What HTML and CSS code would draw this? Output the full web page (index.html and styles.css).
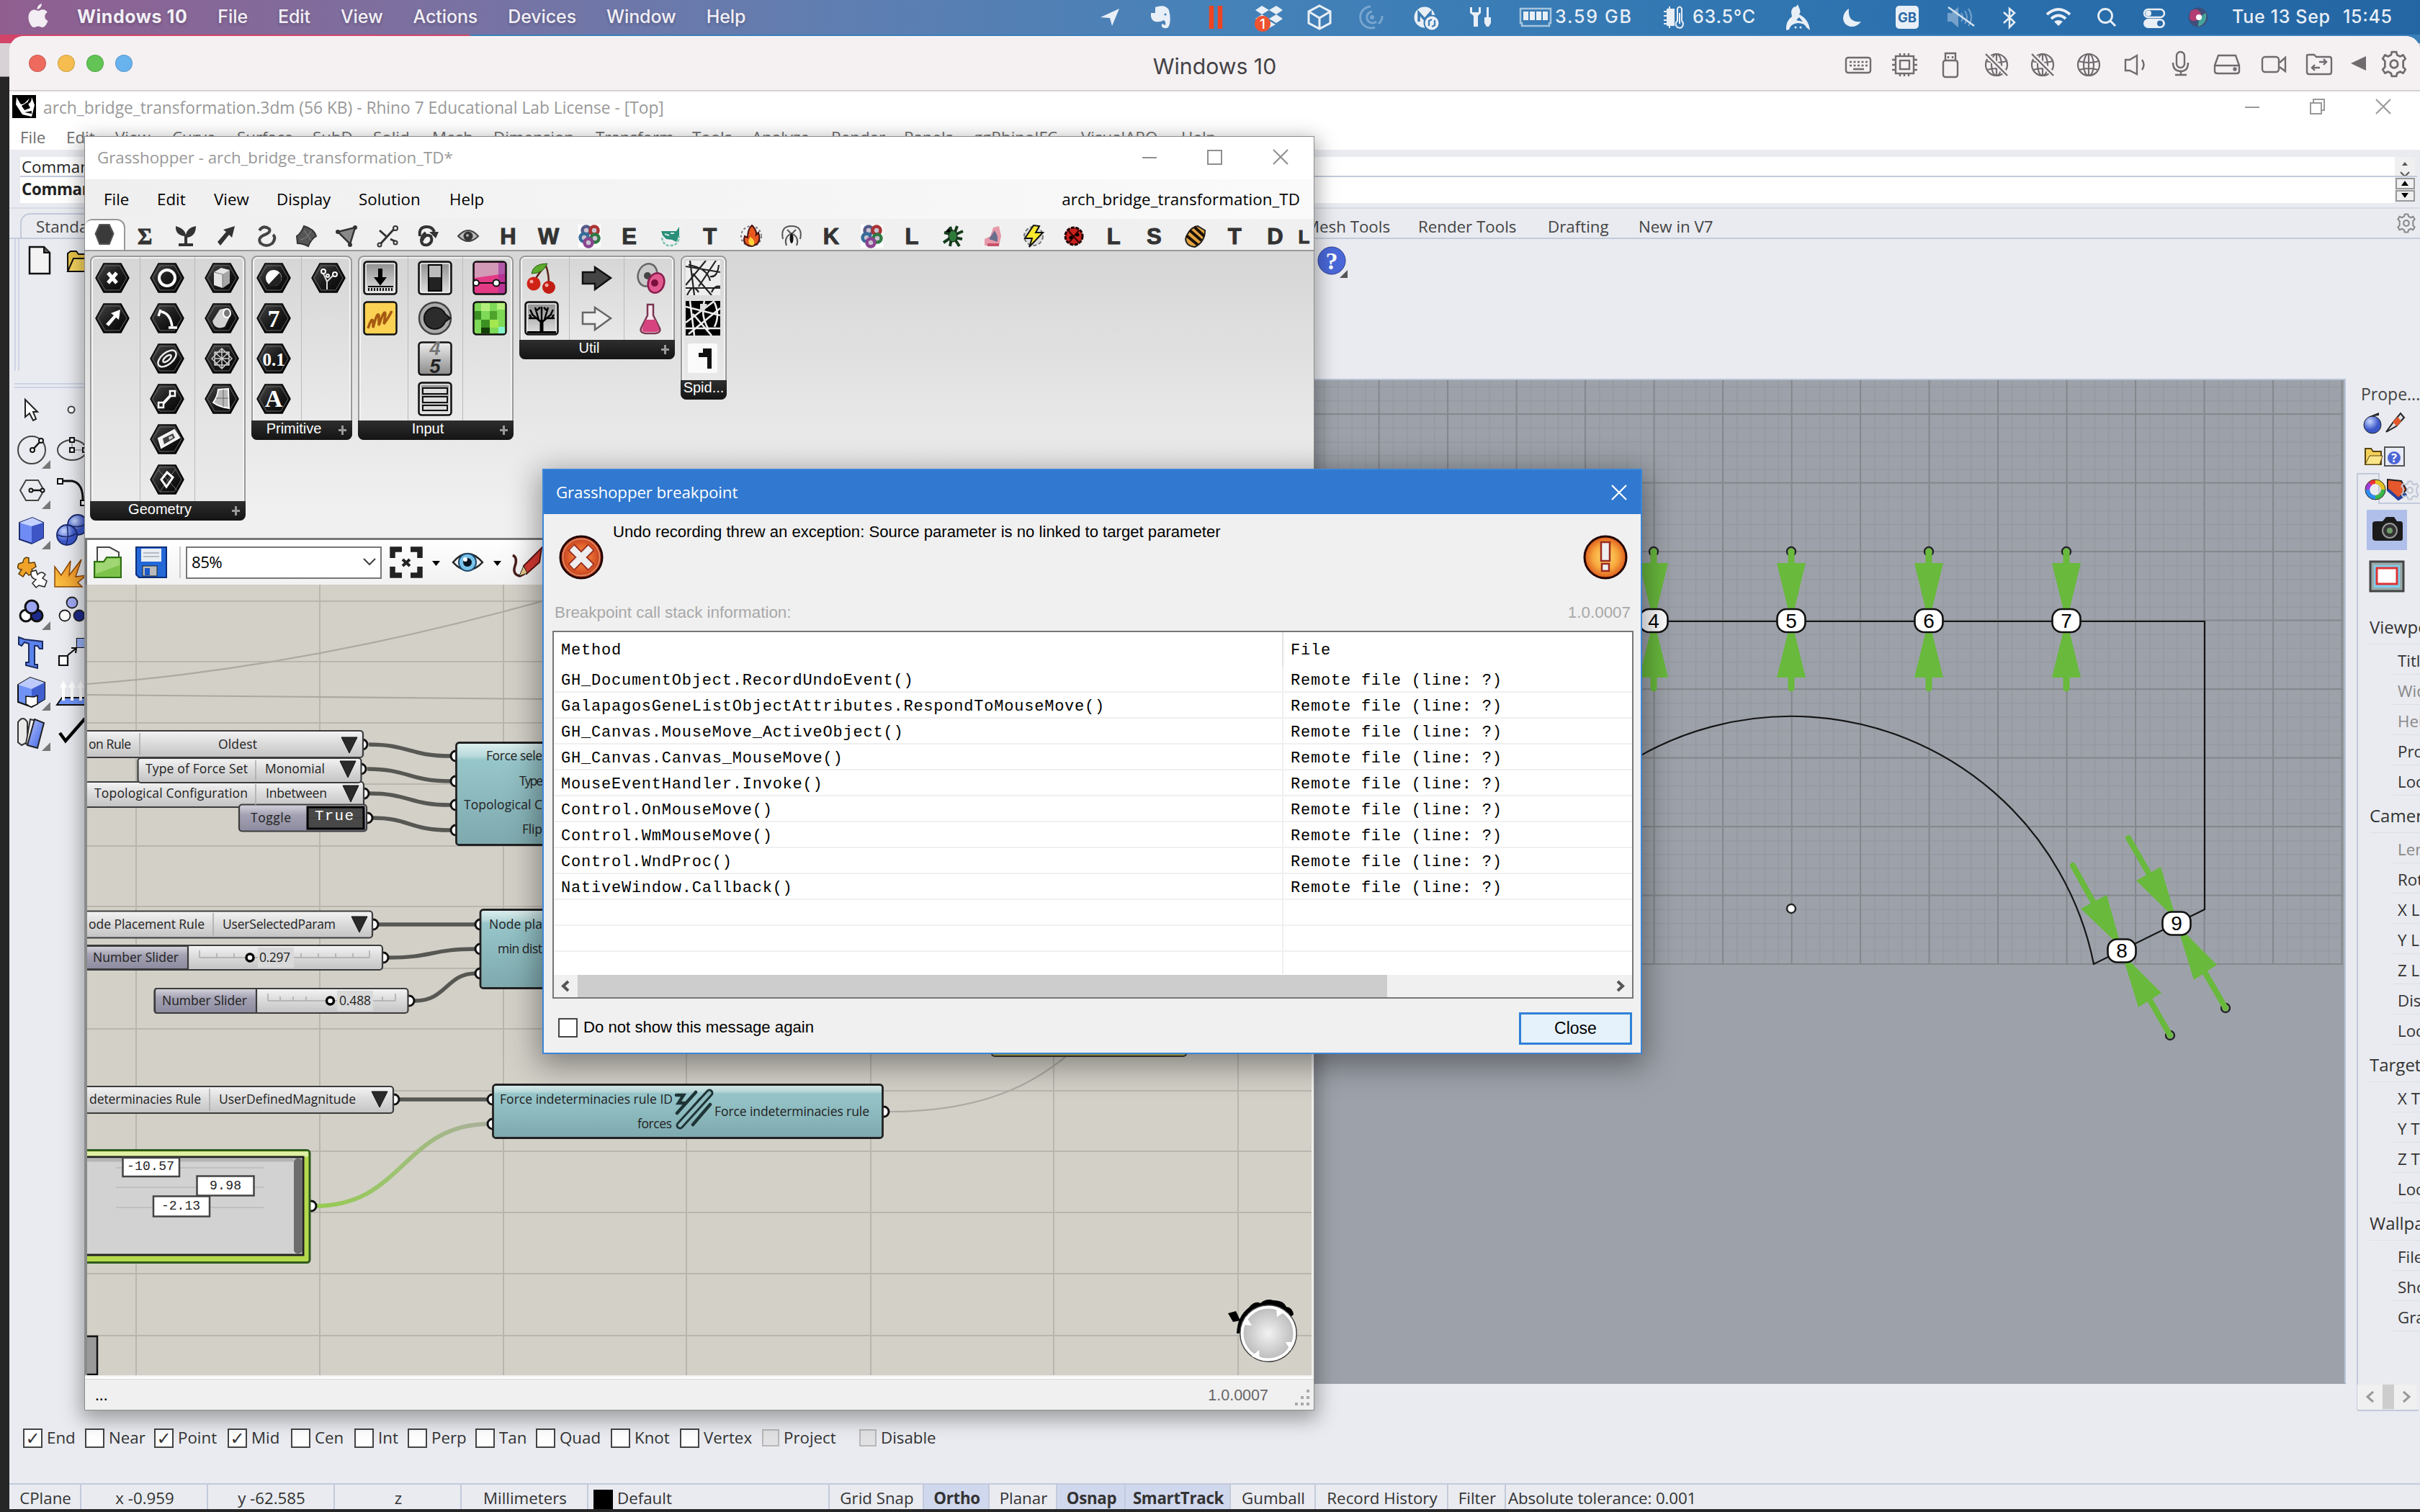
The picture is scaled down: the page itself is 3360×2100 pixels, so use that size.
FILE: index.html
```html
<!DOCTYPE html>
<html lang="en">
<head>
<meta charset="utf-8">
<title>Windows 10</title>
<link rel="stylesheet" href="styles.css">
</head>
<body>
<svg class="defs" width="0" height="0">
  <defs>
    <linearGradient id="hexg" x1="0" y1="0" x2="1" y2="1"><stop offset="0" stop-color="#4a4a4a"/><stop offset=".5" stop-color="#1c1c1c"/><stop offset="1" stop-color="#000"/></linearGradient>
    <linearGradient id="greyg" x1="0" y1="0" x2="0" y2="1"><stop offset="0" stop-color="#eee"/><stop offset="1" stop-color="#8a8a8a"/></linearGradient>
    <linearGradient id="greyr" x1="0" y1="0" x2="0" y2="1"><stop offset="0" stop-color="#8d8d8d"/><stop offset="1" stop-color="#e2e2e2"/></linearGradient>
    <linearGradient id="blueg" x1="0" y1="0" x2="1" y2="1"><stop offset="0" stop-color="#b5c8ff"/><stop offset="1" stop-color="#3c5ee0"/></linearGradient>
    <linearGradient id="flame" x1="0" y1="1" x2="1" y2="0"><stop offset="0" stop-color="#f9c545"/><stop offset="1" stop-color="#ee7d1c"/></linearGradient>
    <linearGradient id="teal" x1="0" y1="0" x2="0" y2="1"><stop offset="0" stop-color="#dff0f0"/><stop offset=".13" stop-color="#b9d9da"/><stop offset=".17" stop-color="#97c6ca"/><stop offset="1" stop-color="#7ea9ae"/></linearGradient>
    <linearGradient id="node" x1="0" y1="0" x2="0" y2="1"><stop offset="0" stop-color="#f4f4f4"/><stop offset=".45" stop-color="#dcdcdc"/><stop offset="1" stop-color="#c3c3c3"/></linearGradient>
    <linearGradient id="mauve" x1="0" y1="0" x2="0" y2="1"><stop offset="0" stop-color="#d5d4dc"/><stop offset=".4" stop-color="#a3a1b2"/><stop offset="1" stop-color="#8c8a9e"/></linearGradient>
    <linearGradient id="wire" x1="0" y1="0" x2="1" y2="0"><stop offset="0" stop-color="#96cb50"/><stop offset=".4" stop-color="#9cc46c"/><stop offset="1" stop-color="#a9ae9c"/></linearGradient>
    <radialGradient id="knob"><stop offset="0" stop-color="#f2f2f2"/><stop offset="1" stop-color="#b8b8b8"/></radialGradient>
    <radialGradient id="redg"><stop offset="0" stop-color="#f5a050"/><stop offset=".6" stop-color="#e2602c"/><stop offset="1" stop-color="#b83a1c"/></radialGradient>
    <radialGradient id="ambg"><stop offset="0" stop-color="#ffe070"/><stop offset=".6" stop-color="#f7a63c"/><stop offset="1" stop-color="#dc5a1c"/></radialGradient>
    <radialGradient id="ball" cx=".35" cy=".3"><stop offset="0" stop-color="#c9d8ff"/><stop offset="1" stop-color="#3b57c9"/></radialGradient>
    <pattern id="gridMinor" x="3251.5" y="1339" width="19.1" height="19.1" patternUnits="userSpaceOnUse"><path d="M0 0H19.1M0 0V19.1" stroke="#8c9197" stroke-width="3" fill="none"/></pattern>
    <pattern id="gridMajor" x="3250.5" y="1338" width="95.5" height="95.5" patternUnits="userSpaceOnUse"><path d="M0 1H95.5M1 0V95.5" stroke="#85888c" stroke-width="2" fill="none"/></pattern>
    <symbol id="hex" viewBox="0 0 48 42"><path d="M1 21L12 1H36L47 21L36 41H12Z" fill="url(#hexg)" stroke="#000" stroke-width="1.5"/><path d="M4 21L14 4H34L44 21L34 38H14Z" fill="none" stroke="#666" stroke-width="1"/></symbol>
    <symbol id="tile" viewBox="0 0 48 48"><rect x="1.5" y="1.5" width="45" height="45" rx="4" fill="url(#greyr)" stroke="#111" stroke-width="2.5"/><rect x="4" y="4" width="40" height="40" rx="2" fill="none" stroke="#eee" stroke-width="1.5"/></symbol>
    <symbol id="knot" viewBox="-18 -18 36 36"><rect x="-16" y="-16" width="31" height="32" fill="#fff"/><g fill="#c9c3d2" stroke-width="4.500"><circle cx="-5" cy="-8" r="5.5" stroke="#555a8a"/><circle cx="6" cy="-8" r="5.5" stroke="#a33"/><circle cx="-8" cy="2" r="5.5" stroke="#366d9a"/><circle cx="7" cy="3" r="5.5" stroke="#2f7a43"/><circle cx="-2" cy="9" r="5.5" stroke="#8a4490"/></g></symbol>
    <symbol id="gear" viewBox="-18 -18 36 36"><g fill="none" stroke="currentColor" stroke-width="2.6"><circle r="5"/><path d="M-3-16H3L4-12L8-10L12-12L15-7L12-4V4L15 7L12 12L8 10L4 12L3 16H-3L-4 12L-8 10L-12 12L-15 7L-12 4V-4L-15-7L-12-12L-8-10L-4-12Z" stroke-linejoin="round"/></g></symbol>
    <symbol id="globe" viewBox="-18 -18 36 36"><g fill="none" stroke="currentColor" stroke-width="2.2"><circle r="15"/><ellipse rx="7" ry="15"/><path d="M0-15V15M-14-5Q0-1 14-5M-13 7Q0 3 13 7"/></g></symbol>
  </defs>
</svg>

<header class="menubar">
  <svg class="apple" width="28" height="34" viewBox="0 0 28 34"><path d="M19 0C19 4 16 8 12.500 8C12.500 4 15.500 .8 19 0ZM14 10C16 10 17.500 8.300 20.500 8.300C23 8.300 25.500 9.800 26.800 12C21.500 15 22.500 22 27.500 24C26 28.500 23 33 20 33C17.500 33 17 31.500 14 31.500C11.200 31.500 10.500 33 8 33C4.500 33 .5 25.500 .5 19C.5 12.500 4.500 8.500 8.500 8.500C11 8.500 12.500 10 14 10Z" fill="#f2eef4"/></svg>
  <nav class="mac-menu"><b>Windows 10</b><span>File</span><span>Edit</span><span>View</span><span>Actions</span><span>Devices</span><span>Window</span><span>Help</span></nav>
  <svg class="status" width="1810" height="48" viewBox="1520 0 1810 48" fill="#e9eff6">
    <path d="M1528 24L1554 12L1544 36L1541 25Z"/>
    <path d="M1604 10Q1618 5 1623 14Q1627 30 1622 38Q1617 41 1613 37V33L1618 35Q1619 30 1616 28Q1611 31 1604 30Q1597 28 1598 18H1604Z"/><circle cx="1618" cy="20" r="1.500" fill="#3f7fb8"/>
    <path d="M1682 8V40M1694 8V40" stroke="#ee4422" stroke-width="6.500"/>
    <path d="M1752 8L1762 14L1752 20L1743 14ZM1772 8L1781 14L1772 20L1762 14ZM1752 20L1762 26L1752 32L1743 26ZM1772 20L1781 26L1772 32L1762 26ZM1762 29L1771 34L1762 39L1753 34Z"/><circle cx="1753" cy="33" r="11" fill="#ee5330"/><text x="1753" y="40" font-size="19" text-anchor="middle" fill="#fff">1</text>
    <path d="M1832 8L1847 16V32L1832 40L1817 32V16ZM1817 16L1832 25L1847 16M1832 25V40" fill="none" stroke="#e9eff6" stroke-width="3"/>
    <path d="M1903 9A15 15 0 1 0 1909 38M1905 16A8 8 0 1 0 1911 30M1919 22A14 14 0 0 1 1914 33" fill="none" stroke="#78a5cf" stroke-width="3"/><circle cx="1905" cy="24" r="3" fill="#78a5cf"/>
    <circle cx="1978" cy="24" r="14.500"/><path d="M1970 30V18L1978 27L1986 18V24" fill="none" stroke="#3b7ab4" stroke-width="3.500"/><circle cx="1988" cy="32" r="10.500" stroke="#3b7ab4" stroke-width="2"/><path d="M1984 36V29L1988 27M1992 28V35L1988 37" fill="none" stroke="#3b7ab4" stroke-width="2.200"/>
    <path d="M2041 10V18L2046 22V37H2052V22L2056 18V10H2053V17H2044V10ZM2064 10H2067V24H2070V32L2067 37H2064L2061 32V24H2064Z"/>
    <path d="M2111 12H2153V32H2151V36H2113V32H2111Z" fill="none" stroke="#a5c4de" stroke-width="2.500"/><path d="M2115 16H2122V28H2115ZM2124 16H2131V28H2124ZM2133 16H2140V28H2133ZM2142 16H2149V28H2142Z"/>
    <g font-size="25"><text x="2159" y="32" textLength="106">3.59 GB</text><text x="2350" y="32" textLength="87">63.5°C</text><text x="3099" y="32" textLength="136">Tue 13 Sep</text><text x="3253" y="32" textLength="68">15:45</text></g>
    <path d="M2315 13H2324V35H2315ZM2310 16H2315M2310 22H2315M2310 28H2315M2310 33H2315M2318 9V13M2318 35V39" stroke="#e9eff6" stroke-width="2"/><path d="M2329 12Q2332 7 2335 12V29Q2339 33 2335 38Q2331 40 2328 37Q2325 32 2329 29Z" fill="none" stroke="#e9eff6" stroke-width="2"/><path d="M2332 18V33" stroke="#e9eff6" stroke-width="2"/>
    <path d="M2487 17Q2488 9 2494 9L2496 6L2498 11Q2501 16 2498 20Q2511 26 2513 42L2508 38Q2506 32 2496 32Q2486 33 2484 41L2480 42Q2479 29 2488 23Z"/><path d="M2498 24L2503 30L2494 28Z" fill="#2f6fac"/><circle cx="2493" cy="38" r="1.500"/><circle cx="2500" cy="38" r="1.500"/>
    <path d="M2567 12Q2565 32 2584 30Q2578 38 2569 37Q2559 34 2559 25Q2560 16 2567 12Z"/>
    <rect x="2632" y="8" width="32" height="32" rx="5"/><text x="2648" y="31" font-size="18.500" font-weight="700" text-anchor="middle" fill="#2a6aa8">GB</text>
    <g stroke="#76a1cb" fill="#76a1cb" stroke-width="2"><path d="M2705 19H2710L2718 12V36L2710 29H2705Z"/><path d="M2723 18Q2727 24 2723 30M2728 15Q2734 24 2728 33M2733 12Q2741 24 2733 36" fill="none"/></g><path d="M2705 10L2741 36" stroke="#d4e2ef" stroke-width="2.500"/>
    <path d="M2782 17L2797 31L2790 38V12L2797 18L2782 32" fill="none" stroke="#e9eff6" stroke-width="2.500"/>
    <g fill="none" stroke="#e9eff6" stroke-width="4"><path d="M2842 20Q2858 6 2874 20M2848 26Q2858 17 2868 26"/></g><path d="M2852 30Q2858 26 2864 30L2858 36Z"/>
    <circle cx="2923" cy="22" r="9.500" fill="none" stroke="#e9eff6" stroke-width="2.800"/><path d="M2930 29L2937 36" stroke="#e9eff6" stroke-width="3"/>
    <rect x="2977" y="13" width="28" height="11" rx="5.500" fill="none" stroke="#e9eff6" stroke-width="2.500"/><circle cx="2983" cy="18.500" r="4"/><rect x="2976" y="26" width="30" height="13" rx="6.500"/><circle cx="2999" cy="32.500" r="4" fill="#2a6aa8"/>
    <circle cx="3052" cy="24" r="13.500" fill="#3f4f7a"/><path d="M3041 16Q3052 8 3057 22Q3046 34 3040 26Z" fill="#b23d74"/><path d="M3052 37Q3065 33 3063 18Q3052 22 3052 37Z" fill="#46a39a"/><circle cx="3053" cy="24" r="4" fill="#fff"/>
  </svg>
</header>

<div class="backdrop"></div>

<main class="vm">
  <div class="vm-title">
    <div class="lights"><i class="r"></i><i class="y"></i><i class="g"></i><i class="b"></i></div>
    <h1>Windows 10</h1>
    <svg class="devices" width="792" height="76" viewBox="2556 50 792 76" fill="none" stroke="#6f6b6e" color="#6f6b6e" stroke-width="2.400">
      <rect x="2563" y="80" width="34" height="21" rx="3"/><path d="M2568 86H2593M2568 91H2593" stroke-dasharray="3 2.500"/><path d="M2573 96H2588"/>
      <rect x="2632" y="78" width="25" height="24"/><rect x="2638" y="84" width="13" height="12"/><path d="M2638 74V78M2644 74V78M2650 74V78M2638 102V106M2644 102V106M2650 102V106M2627 83H2632M2627 90H2632M2627 97H2632M2657 83H2662M2657 90H2662M2657 97H2662"/>
      <rect x="2698" y="84" width="20" height="23" rx="3"/><path d="M2701 84V74H2715V84M2705 78V81M2711 78V81"/>
      <g id="offline"><use href="#globe" x="2754" y="72" width="36" height="36"/><path d="M2757 75L2788 105" stroke="#f5f1f3" stroke-width="7"/><path d="M2757 75L2787 105"/></g><use href="#offline" x="64"/>
      <use href="#globe" x="2882" y="72" width="36" height="36"/>
      <path d="M2951 83H2957L2967 77V103L2957 98H2951ZM2974 83Q2979 90 2974 97"/>
      <rect x="3022" y="72" width="11" height="22" rx="5.500"/><path d="M3017 87Q3017 99 3028 99Q3038 99 3038 87M3028 99V104M3020 104H3036"/>
      <path d="M3075 91L3080 77H3104L3109 91V99Q3109 102 3105 102H3079Q3075 102 3075 99ZM3075 91H3109"/><circle cx="3103" cy="96" r="1.500"/>
      <rect x="3141" y="79" width="23" height="21" rx="4"/><path d="M3165 87L3173 80V99L3165 93"/>
      <path d="M3203 80V77Q3203 76 3206 76H3213L3216 79H3234Q3237 79 3237 82V100Q3237 103 3234 103H3206Q3203 103 3203 100ZM3220 86H3229M3226 82L3230 86L3226 90M3221 94H3211M3214 90L3210 94L3214 98"/>
      <path d="M3264 88L3285 78V98Z" fill="#6f6b6e" stroke="none"/>
      <use href="#gear" x="3305" y="70" width="38" height="38"/>
    </svg>
  </div>

  <section class="rhino">
    <div class="r-title">
      <svg width="33" height="32" viewBox="0 0 33 32"><rect width="33" height="32" fill="#000"/><path d="M6 3L5 13L14 27L27 30L31 14L27 3Q27 12 20 13L24 4Q13 18 10 10Z" fill="#fff"/><path d="M13 15L21 10L25 18L17 21ZM17 24L27 22V26Z" fill="#000"/></svg>
      <span>arch_bridge_transformation.3dm (56 KB) - Rhino 7 Educational Lab License - [Top]</span>
      <svg class="wbtn" width="204" height="24" viewBox="3117 134 204 24" fill="none" stroke="#999" stroke-width="2"><path d="M3118 147H3138M3209 141H3224V156H3209ZM3213 141V136H3228V151H3224M3300 136L3320 156M3320 136L3300 156"/></svg>
    </div>
    <div class="r-menu"><span>File</span><span>Edit</span><span>View</span><span>Curve</span><span>Surface</span><span>SubD</span><span>Solid</span><span>Mesh</span><span>Dimension</span><span>Transform</span><span>Tools</span><span>Analyze</span><span>Render</span><span>Panels</span><span>ggRhinoIFC</span><span>VisualARQ</span><span>Help</span></div>
    <div class="r-cmd">
      <div class="lines"><p>Command:</p><p class="in">Command:</p></div>
      <svg width="31" height="64" viewBox="0 0 31 64"><rect width="28" height="27" fill="#f0f0f0"/><path d="M10 12L14 7L18 12Z" fill="#555"/><path d="M8 21L14 27L20 21" stroke="#555" stroke-width="2" fill="none"/><path d="M0 27H31" stroke="#c3cadb" stroke-width="2"/><rect x="2" y="30" width="25" height="14" fill="#f0f0f0" stroke="#999" stroke-width="2"/><rect x="2" y="47" width="25" height="14" fill="#f0f0f0" stroke="#999" stroke-width="2"/><path d="M9 40L14 33L19 40ZM9 50L14 57L19 50Z" fill="#000"/></svg>
    </div>
    <div class="r-tabs"><span class="on">Standard</span><span>Mesh Tools</span><span>Render Tools</span><span>Drafting</span><span>New in V7</span><svg width="28" height="28" color="#888"><use href="#gear" width="28" height="28"/></svg></div>
    <div class="r-bar">
      <svg width="32" height="42" viewBox="0 0 32 42"><path d="M2 2H22L30 10V39H2Z" fill="#f3f3f3" stroke="#111" stroke-width="2.500"/><path d="M22 2V10H30" fill="#555" stroke="#111" stroke-width="2"/></svg>
      <svg width="44" height="32" viewBox="0 0 44 32"><path d="M2 28V4L6 1H14L17 5H42V28Z" fill="#e8c548" stroke="#111" stroke-width="2"/><path d="M2 29L10 11H44V29Z" fill="#f6d45e" stroke="#111" stroke-width="2"/></svg>
      <svg class="help" width="44" height="46" viewBox="0 0 44 46"><circle cx="20" cy="21" r="19" fill="#4a68d8" stroke="#2a3c90"/><text x="20" y="33" font-size="34" font-weight="700" text-anchor="middle" fill="#fff">?</text><path d="M42 34V45H31Z" fill="#555"/></svg>
    </div>
    <div class="r-mid">
      <div class="tools">
        <svg viewBox="0 0 56 56"><path d="M19 14V38L25 33L30 43L34 41L30 31H36Z" fill="#fff" stroke="#222" stroke-width="2"/></svg>
        <svg viewBox="0 0 56 56"><circle cx="27" cy="28" r="4.500" fill="#fff" stroke="#444" stroke-width="2"/></svg>
        <svg viewBox="0 0 56 56"><circle cx="28" cy="28" r="19" fill="none" stroke="#444" stroke-width="2"/><path d="M29 28L41 15" stroke="#111" stroke-width="2.500"/><circle cx="29" cy="28" r="3" fill="#fff" stroke="#111" stroke-width="2"/><circle cx="41" cy="15" r="3" fill="#fff" stroke="#111" stroke-width="2"/><path d="M54 42V54H42Z" fill="#777"/></svg>
        <svg viewBox="0 0 56 56"><ellipse cx="28" cy="28" rx="20" ry="14" fill="none" stroke="#444" stroke-width="2"/><path d="M28 14V28H46" stroke="#777" fill="none"/><path d="M25 11H31V17H25ZM25 25H31V31H25ZM43 25H49V31H43Z" fill="#fff" stroke="#111" stroke-width="2"/></svg>
        <svg viewBox="0 0 56 56"><path d="M12 28L20 14H37L45 28L37 42H20Z" fill="none" stroke="#444" stroke-width="2"/><path d="M27 28H43" stroke="#111" stroke-width="2.500"/><circle cx="27" cy="28" r="2.500" fill="#fff" stroke="#111" stroke-width="2"/><circle cx="43" cy="28" r="2.500" fill="#fff" stroke="#111" stroke-width="2"/><path d="M54 42V54H42Z" fill="#777"/></svg>
        <svg viewBox="0 0 56 56"><path d="M12 15H28Q44 18 43 44" fill="none" stroke="#111" stroke-width="3"/><path d="M8 12H15V19H8ZM40 42H47V49H40Z" fill="#fff" stroke="#111" stroke-width="2"/></svg>
        <svg viewBox="0 0 56 56"><path d="M11 17L29 10L44 17V38L28 46L11 40Z" fill="#6f8cf5" stroke="#1c2b70" stroke-width="2"/><path d="M11 17L29 10L44 17L28 22Z" fill="#c4d1ff"/><path d="M44 17V38L28 46V22Z" fill="#3d55c5"/><path d="M54 42V54H42Z" fill="#777"/></svg>
        <svg viewBox="0 0 56 56"><circle cx="36" cy="20" r="14" fill="url(#ball)" stroke="#1c2b70" stroke-width="2"/><circle cx="21" cy="34" r="14" fill="url(#ball)" stroke="#1c2b70" stroke-width="2"/><path d="M8 34Q21 40 34 32M21 20Q24 34 20 48M22 20Q36 26 49 18" stroke="#1c2b70" fill="none" stroke-width="1.500"/></svg>
        <svg viewBox="0 0 56 56"><path d="M10 18L16 16Q17 7 24 10L24 17L32 16L34 22L28 26L32 32L24 34L20 30L16 36L10 32L14 26Q6 26 10 18Z" fill="#f0a32a" stroke="#5a3a08" stroke-width="1.500"/><path d="M27 29L34 27L36 33Q42 27 47 33L43 38L49 42L46 50L38 48L34 51L29 45L34 40Q26 38 27 29Z" fill="#fff" stroke="#222" stroke-width="1.500"/></svg>
        <svg viewBox="0 0 56 56"><path d="M4 50V22L13 34L26 14L24 34L41 12L33 36L48 34L36 44L42 50Z" fill="url(#flame)" stroke="#8c4a08" stroke-width="1.500"/></svg>
        <svg viewBox="0 0 56 56"><g stroke="#111" stroke-width="3"><circle cx="20" cy="34" r="8" fill="#fff"/><circle cx="35" cy="34" r="8" fill="#1d2a8c"/><circle cx="28" cy="22" r="9" fill="#9aa4f0"/></g><path d="M54 42V54H42Z" fill="#777"/></svg>
        <svg viewBox="0 0 56 56"><g stroke="#222" stroke-width="1.800"><circle cx="28" cy="16" r="7.500" fill="#a0a8f4"/><circle cx="18" cy="34" r="7.500" fill="#fff"/><circle cx="38" cy="34" r="7.500" fill="#1d2a8c"/></g></svg>
        <svg viewBox="0 0 56 56"><path d="M10 8L18 11L43 14V24H39L36 20L32 20V46H36V51L20 47V43H24V17L18 15L14 20L10 18Z" fill="#5a82ec" stroke="#1a2a60" stroke-width="2"/></svg>
        <svg viewBox="0 0 56 56"><path d="M10 34H22V47H10ZM35 10H48V22H35Z" fill="#fff" stroke="#111" stroke-width="2.200"/><path d="M35 10H48V22H35Z" fill="#98b0f8"/><path d="M22 33L33 24M27 23L34 23L33 30" stroke="#111" stroke-width="2.200" fill="none"/></svg>
        <svg viewBox="0 0 56 56"><path d="M9 18L26 8L46 15V38L28 49L9 42Z" fill="#6f93f5" stroke="#111" stroke-width="2"/><path d="M9 18L26 8L46 15L28 24Z" fill="#bccbfc"/><path d="M46 15V38L28 48V24Z" fill="#4060d0"/><path d="M20 34L31 35L36 33V45L27 49L20 45Z" fill="#fff" stroke="#111" stroke-width="1.500"/><path d="M54 42V54H42Z" fill="#777"/></svg>
        <svg viewBox="0 0 56 56"><path d="M7 46L14 36H52L46 46Z" fill="#6f93f5" stroke="#111" stroke-width="2"/><path d="M16 40V18M28 40V18M40 40V18" stroke="#fff" stroke-width="4"/><path d="M11 22L16 12L21 22ZM23 22L28 12L33 22ZM35 22L40 12L45 22Z" fill="#fff"/></svg>
        <svg viewBox="0 0 56 56"><path d="M9 14Q16 4 22 14V42L14 46L9 42Z" fill="#e9e9e9" stroke="#333" stroke-width="2"/><path d="M26 10L20 44L26 46L34 12Z" fill="#f5f5f5" stroke="#333" stroke-width="2"/><path d="M32 10L45 15L36 50L22 46Z" fill="url(#blueg)" stroke="#222" stroke-width="2"/><path d="M54 42V54H42Z" fill="#777"/></svg>
        <svg viewBox="0 0 56 56"><path d="M11 29L19 40L46 9" fill="none" stroke="#000" stroke-width="4.500"/></svg>
      </div>
      <svg class="viewport" width="3129" height="1396" viewBox="128 526 3129 1396">
        <rect x="128" y="526" width="3129" height="1396" fill="#9da2aa"/>
        <rect x="1600" y="528" width="1652" height="812" fill="url(#gridMinor)" opacity=".5"/><rect x="1600" y="528" width="1653" height="812" fill="url(#gridMajor)"/>
        <path d="M128 527H3256V1921" fill="none" stroke="#b9c4d8" stroke-width="2"/>
        <path d="M1900 863H3061V1263L2907 1339A428.400 428.400 0 0 0 2080 1289.300" fill="none" stroke="#151515" stroke-width="2.200"/>
        <circle cx="2487" cy="1262" r="6" fill="#fff" stroke="#222" stroke-width="2.400"/>
        <defs><g id="force"><circle cx="0" cy="766" r="6" fill="none" stroke="#222" stroke-width="2.400"/><path d="M0 766V790M0 935V956" stroke="#69b93d" stroke-width="9" stroke-linecap="round"/><path d="M-20 782H20L4 848H-4ZM-20 941H20L4 876H-4Z" fill="#69b93d"/><rect x="-19.500" y="846" width="39" height="32" rx="13" fill="#fff" stroke="#111" stroke-width="2.600"/></g></defs>
        <use href="#force" x="2296"/><use href="#force" x="2487"/><use href="#force" x="2678"/><use href="#force" x="2869"/>
        <g stroke="#222" stroke-width="2.400" fill="none"><circle cx="3013" cy="1438" r="6"/><circle cx="3090" cy="1400" r="6"/></g>
        <path d="M2878 1202L2907 1254M2955 1164L2984 1214M2985 1389L3013 1438M3061 1350L3090 1400" stroke="#69b93d" stroke-width="8" stroke-linecap="round"/>
        <path d="M2889 1262L2925 1243L2943 1307H2936ZM2966 1223L3000 1204L3019 1268H3012ZM3001 1379L2969 1399L2949 1334H2956ZM3078 1340L3046 1361L3026 1296H3034Z" fill="#69b93d"/>
        <g fill="#fff" stroke="#111" stroke-width="2.600"><rect x="2926.500" y="1304.500" width="39" height="32" rx="13"/><rect x="3002.500" y="1266.500" width="39" height="32" rx="13"/></g>
        <g class="num"><text x="2296" y="872">4</text><text x="2487" y="872">5</text><text x="2678" y="872">6</text><text x="2869" y="872">7</text><text x="2946" y="1330">8</text><text x="3022" y="1292">9</text></g>
      </svg>
      <aside class="props">
        <h2>Prope...</h2>
        <svg width="87" height="180" viewBox="3273 652 87 180" overflow="visible">
          <circle cx="3294" cy="590" r="12" fill="url(#ball)" stroke="#222"/><path d="M3288 579L3303 573V577Z" fill="#222"/>
          <path d="M3313 600L3323 586L3333 574L3338 580L3327 592Z" fill="#ddd" stroke="#222" stroke-width="2"/><path d="M3322 586L3329 579L3334 585L3328 592Z" fill="#e4572a"/>
          <path d="M3284 623H3292L3295 627H3306V645H3284Z" fill="#f3d05a" stroke="#5a4510" stroke-width="2"/><path d="M3284 645L3290 633H3308L3304 645Z" fill="#fbe58a" stroke="#5a4510"/>
          <rect x="3311" y="621" width="27" height="26" fill="#e8ebf8" stroke="#555" stroke-width="2"/><circle cx="3324" cy="636" r="9" fill="#4b66d6"/><text x="3324" y="642" font-size="16" font-weight="700" text-anchor="middle" fill="#fff">?</text>
          <path d="M3273 1958V658H3303V699H3360" fill="none" stroke="#c3cadb" stroke-width="2"/>
          <circle cx="3298" cy="680" r="11" fill="none" stroke="#e33" stroke-width="6"/><path d="M3298 669A11 11 0 0 1 3309 680" fill="none" stroke="#e2c422" stroke-width="6"/><path d="M3309 680A11 11 0 0 1 3298 691" fill="none" stroke="#38b749" stroke-width="6"/><path d="M3298 691A11 11 0 0 1 3287 680" fill="none" stroke="#2c8df0" stroke-width="6"/><path d="M3287 680A11 11 0 0 1 3291 672" fill="none" stroke="#a03be0" stroke-width="6"/><circle cx="3298" cy="680" r="14" fill="none" stroke="#333" stroke-width="1"/>
          <path d="M3315 666L3334 668L3341 680L3330 693L3315 680Z" fill="#e5572c" stroke="#222" stroke-width="2"/><path d="M3315 680L3330 693L3341 686" fill="none" stroke="#2742a0" stroke-width="4"/><use href="#gear" x="3332" y="667" width="28" height="28" color="#c0c6d4"/>
          <rect x="3286" y="708" width="56" height="56" fill="#b0bfe9"/><path d="M3294 727Q3294 724 3299 724H3308L3313 718H3324L3328 724H3333Q3336 724 3336 728V748Q3336 751 3333 751H3299Q3294 751 3294 747Z" fill="#1b1b1b"/><circle cx="3318" cy="737" r="10" fill="#333" stroke="#999" stroke-width="2"/><circle cx="3318" cy="737" r="4" fill="#6f9a6a"/>
          <rect x="3291" y="780" width="46" height="41" fill="#9aa" stroke="#444" stroke-width="3"/><rect x="3296" y="785" width="36" height="31" fill="#7fd0ee"/><rect x="3300" y="789" width="28" height="22" fill="#fff" stroke="#d33" stroke-width="3"/>
        </svg>
        <dl>
          <dt>Viewport</dt><dd>Title</dd><dd class="dim">Width</dd><dd class="dim">Height</dd><dd>Projection</dd><dd>Locked</dd>
          <dt>Camera</dt><dd class="dim">Lens Length</dd><dd>Rotation</dd><dd>X Location</dd><dd>Y Location</dd><dd>Z Location</dd><dd>Distance</dd><dd>Location</dd>
          <dt>Target</dt><dd>X Target</dd><dd>Y Target</dd><dd>Z Target</dd><dd>Location</dd>
          <dt>Wallpaper</dt><dd>Filename</dd><dd>Show</dd><dd>Gray</dd>
        </dl>
        <svg class="hs" width="85" height="37" viewBox="0 0 85 37"><rect y="0" width="83" height="34" fill="#f0f0f0"/><rect x="35" width="16" height="34" fill="#cdcdcd"/><path d="M22 10L14 17L22 24M64 10L72 17L64 24" fill="none" stroke="#999" stroke-width="3"/><path d="M0 36H85" stroke="#c3cadb" stroke-width="2"/></svg>
      </aside>
    </div>
    <div class="osnap">
      <label><i class="c">✓</i>End</label><label><i></i>Near</label><label><i class="c">✓</i>Point</label><label><i class="c">✓</i>Mid</label><label><i></i>Cen</label><label><i></i>Int</label><label><i></i>Perp</label><label><i></i>Tan</label><label><i></i>Quad</label><label><i></i>Knot</label><label><i></i>Vertex</label><label><i class="off"></i>Project</label><label><i class="off"></i>Disable</label>
    </div>
    <footer class="r-status"><span>CPlane</span><span>x -0.959</span><span>y -62.585</span><span>z</span><span>Millimeters</span><span class="layer"><i></i>Default</span><span>Grid Snap</span><span class="act">Ortho</span><span>Planar</span><span class="act">Osnap</span><span class="act">SmartTrack</span><span>Gumball</span><span>Record History</span><span>Filter</span><span class="tol">Absolute tolerance: 0.001</span></footer>
  </section>
</main>

<section class="gh">
  <div class="gh-title"><span>Grasshopper - arch_bridge_transformation_TD*</span><svg width="204" height="24" viewBox="1585 206 204 24" fill="none" stroke="#8f8f8f" stroke-width="2"><path d="M1586 219H1606M1677 209H1696V228H1677ZM1768 208L1788 228M1788 208L1768 228"/></svg></div>
  <div class="gh-menu"><span>File</span><span>Edit</span><span>View</span><span>Display</span><span>Solution</span><span>Help</span><span class="doc">arch_bridge_transformation_TD</span></div>
  <div class="gh-tabs">
    <svg class="sel" viewBox="-28 -22 56 44"><path d="M-13-3L-7-16H7L13-3L7 12H-7Z" fill="#3a3a3a" stroke="#555" stroke-width="2"/></svg>
    <b class="sig">Σ</b>
    <svg viewBox="-28 -22 56 44"><path d="M-2 0Q-15-2-14-14Q-1-10 0-2Q2-12 14-14Q14 0 2 2V10H10V14H-10V10H-2Z" fill="#333"/></svg>
    <svg viewBox="-28 -22 56 44"><path d="M-12 8L0-6L-4-9L12-14L8 2L4-2L-8 13Z" fill="#333"/></svg>
    <svg viewBox="-28 -22 56 44"><path d="M-10-8Q-4-16 4-10Q6-6 0-3Q-14 2-8 10Q0 16 8 10Q14 2 9-2" fill="none" stroke="#444" stroke-width="4"/></svg>
    <svg viewBox="-28 -22 56 44"><path d="M-14 0Q-8-4-4-14Q10-10 13 0Q6 4 2 14Q-6 10-13 10Z" fill="#555" stroke="#333" stroke-width="2"/><path d="M-9 5Q2 3 6-8M-4-8Q2 0 6 6" stroke="#888" fill="none"/></svg>
    <svg viewBox="-28 -22 56 44"><path d="M-13-6L11-12L4 11Z" fill="#888" stroke="#333" stroke-width="2.500"/><circle cx="-13" cy="-6" r="3" fill="#333"/><circle cx="11" cy="-12" r="3" fill="#333"/><circle cx="4" cy="12" r="3" fill="#333"/></svg>
    <svg viewBox="-28 -22 56 44"><path d="M-11 12L11-12M-11-8L-2 0M4 4L12 8" stroke="#333" stroke-width="3"/><g fill="#eee" stroke="#333" stroke-width="2"><circle cx="11" cy="-11" r="3"/><circle cx="-11" cy="12" r="2.500"/><circle cx="11" cy="9" r="2.500"/></g></svg>
    <svg viewBox="-28 -22 56 44"><path d="M-11 0Q-13-12-3-13Q6-14 9-6M-8 6Q-4-4 4 0Q8 8 0 12Q-9 14-9 5Q-8-1-3-5" fill="none" stroke="#333" stroke-width="4"/><path d="M2-6H15L11 3Z" fill="#333"/></svg>
    <svg viewBox="-28 -22 56 44"><path d="M-14 0Q0-16 14 0Q0 14-14 0Z" fill="#bbb" stroke="#444" stroke-width="2"/><circle r="6.500" fill="#333"/><circle cx="-1" cy="-1" r="2" fill="#aaa"/></svg>
    <b>H</b><b>W</b><svg viewBox="-28 -22 56 44"><use href="#knot" x="-18" y="-18" width="36" height="36"/></svg><b>E</b>
    <svg viewBox="-28 -22 56 44"><path d="M-13-7H8L12-13V-1L8 8L2 5L-6 4L-11-1Z" fill="#2a8f79"/><path d="M-8-3L-2-1M0-4H5" stroke="#cfe8e0" stroke-width="2"/><path d="M-12 2Q-10 14 0 13Q11 13 12 0" fill="none" stroke="#7cc2b2" stroke-width="2.500" stroke-dasharray="4 2"/></svg>
    <b>T</b>
    <svg viewBox="-28 -22 56 44"><circle r="14" fill="none" stroke="#777" stroke-width="2" stroke-dasharray="3 3"/><path d="M0 14Q-13 12-9 0L-5 2Q-5-10 1-15Q8-8 7-2L10-5Q14 8 6 12Z" fill="#e8581e" stroke="#411" stroke-width="2"/><path d="M0 13Q-7 9-1 1Q7 7 3 13Z" fill="#ffd23a"/></svg>
    <svg viewBox="-28 -22 56 44"><path d="M-12 4Q-16-14 0-14Q16-14 12 4M-7 13Q-11 3-2-3M7 13Q11 3 2-3M-6-9L0-3L6-9" fill="none" stroke="#555" stroke-width="2"/><ellipse cy="3" rx="2.500" ry="7" fill="#111"/></svg>
    <b>K</b><svg viewBox="-28 -22 56 44"><use href="#knot" x="-18" y="-18" width="36" height="36"/></svg><b>L</b>
    <svg viewBox="-28 -22 56 44"><path d="M-12-5L0-2L-4-13M2-3L6-14M3-2L14-7M2 2L13 4M2 3L9 14M-2 3L-4 14M-3 2L-13 9" stroke="#153d1c" stroke-width="4"/><ellipse rx="6" ry="8" fill="#2d7a38" stroke="#111"/></svg>
    <svg viewBox="-28 -22 56 44"><path d="M-12 13V4L-4 0L0-12L8-14L11 0L8 13Z" fill="#e79aa9"/><path d="M-6 4L2-8L6 0V8Z" fill="#6b6f8e"/><path d="M-8 12H8" stroke="#c6506a" stroke-width="4"/></svg>
    <svg viewBox="-28 -22 56 44"><circle r="13" fill="#ddd" stroke="#777" stroke-width="2" stroke-dasharray="5 3"/><path d="M0-15L-12 3H-2L-6 15L13-5H3L8-14Z" fill="#ffe92e" stroke="#111" stroke-width="2"/></svg>
    <svg viewBox="-28 -22 56 44"><circle r="12" fill="#c9201c" stroke="#200" stroke-width="3" stroke-dasharray="5 1.500"/><path d="M-8-8L8 10M7-8L-7 9" stroke="#300" stroke-width="2"/><circle cx="-4" cy="2" r="2.500"/><circle cx="5" cy="-2" r="2.500"/></svg>
    <b>L</b><b>S</b>
    <svg viewBox="-28 -22 56 44"><path d="M-13 4Q-8-12 4-14L14-8Q14 8 0 15Q-12 14-13 4Z" fill="#e3a340" stroke="#222" stroke-width="2"/><path d="M-12-1L4 12M-7-8L9 6M-1-13L13 0" stroke="#1b1208" stroke-width="4"/></svg>
    <b>T</b><b>D</b><b class="cut">L</b>
  </div>
  <div class="ribbon">
    <div class="panel c3"><div class="cols">
      <div><svg viewBox="0 0 48 42"><use href="#hex"/><path d="M18 14L30 28M30 14L18 28" stroke="#fff" stroke-width="5"/></svg><svg viewBox="0 0 48 42"><use href="#hex"/><path d="M15 29L26 17L22 14L35 9L33 23L29 20L19 32Z" fill="#fff"/></svg></div>
      <div><svg viewBox="0 0 48 42"><use href="#hex"/><circle cx="24" cy="21" r="11" fill="none" stroke="#fff" stroke-width="4"/></svg><svg viewBox="0 0 48 42"><use href="#hex"/><path d="M16 12Q28 14 31 32M26 34H38M12 18L15 9" fill="none" stroke="#fff" stroke-width="3.500"/></svg><svg viewBox="0 0 48 42"><use href="#hex"/><g transform="rotate(-40 24 21)" fill="none" stroke="#eee" stroke-width="2.500"><ellipse cx="24" cy="21" rx="15" ry="8"/><ellipse cx="24" cy="21" rx="7" ry="3"/></g></svg><svg viewBox="0 0 48 42"><use href="#hex"/><path d="M17 29L31 14" stroke="#fff" stroke-width="4"/><path d="M12 26H19V33H12ZM28 10H35V17H28Z" fill="#222" stroke="#fff" stroke-width="2.500"/></svg><svg viewBox="0 0 48 42"><use href="#hex"/><path d="M12 20L34 8L41 19L16 33Z" fill="#eee" stroke="#fff" stroke-width="2"/><path d="M18 20L32 13L35 19L20 28Z" fill="#444"/><path d="M26 18L31 16L32 19L27 22Z" fill="#ccc"/></svg><svg viewBox="0 0 48 42"><use href="#hex"/><path d="M12 8L38 36M36 6L14 38" stroke="#777"/><path d="M16 21L24 11L32 18L23 31Z" fill="none" stroke="#fff" stroke-width="3"/></svg></div>
      <div><svg viewBox="0 0 48 42"><use href="#hex"/><path d="M13 13L23 7L35 10V28L25 35L13 31Z" fill="#e4e4e4"/><path d="M25 16L35 10V28L25 35Z" fill="#a5a5a5"/><path d="M13 13L25 16V35" stroke="#777" fill="none"/></svg><svg viewBox="0 0 48 42"><use href="#hex"/><path d="M11 25L21 9Q34 4 37 15L28 33Q14 38 11 25Z" fill="#d2d2d2"/><ellipse cx="31" cy="14" rx="5" ry="6" fill="#777" stroke="#fff" stroke-width="2"/></svg><svg viewBox="0 0 48 42"><use href="#hex"/><path d="M14 12H34V30H14ZM14 21H34M24 7V35M14 12L34 30M34 12L14 30M10 21L24 7L38 21L24 35Z" fill="none" stroke="#ccc" stroke-width="1.500"/></svg><svg viewBox="0 0 48 42"><use href="#hex"/><path d="M19 8L33 7L34 34Q20 32 12 26Q18 18 19 8Z" fill="#bbb" stroke="#fff" stroke-width="2"/><path d="M26 8V32M16 20H33" stroke="#666"/></svg></div>
    </div><p>Geometry</p></div>
    <div class="panel c2"><div class="cols">
      <div><svg viewBox="0 0 48 42"><use href="#hex"/><circle cx="24" cy="21" r="11" fill="#fff"/><path d="M32 14A11 11 0 0 1 17 30Z" fill="#222"/></svg><svg viewBox="0 0 48 42"><use href="#hex"/><text x="24" y="33" class="hx">7</text></svg><svg viewBox="0 0 48 42"><use href="#hex"/><text x="24" y="31" class="hx sm">0.1</text></svg><svg viewBox="0 0 48 42"><use href="#hex"/><text x="24" y="32" class="hx">A</text></svg></div>
      <div><svg viewBox="0 0 48 42"><use href="#hex"/><path d="M22 37V26L16 13M22 26L32 16" stroke="#ddd" stroke-width="2" fill="none"/><g fill="#222" stroke="#fff" stroke-width="2"><circle cx="17" cy="12" r="3"/><circle cx="33" cy="16" r="3"/><circle cx="23" cy="18" r="2"/></g></svg></div>
    </div><p>Primitive</p></div>
    <div class="panel c3"><div class="cols sq">
      <div><svg viewBox="0 0 48 48"><use href="#tile"/><path d="M22 12H26V24H31L24 33L17 24H22Z" fill="#000" stroke="#000" stroke-width="2"/><path d="M7 36H42" stroke="#111" stroke-width="2"/><path d="M7 40H42" stroke="#111" stroke-width="4" stroke-dasharray="2 2"/></svg><svg viewBox="0 0 48 48"><rect x="1.500" y="1.500" width="45" height="45" rx="4" fill="#fbd253" stroke="#111" stroke-width="2.500"/><path d="M7 38Q12 22 14 28V37Q20 14 22 20V34Q30 10 31 18L29 32Q36 22 40 14" fill="none" stroke="#a65a12" stroke-width="3.500"/></svg></div>
      <div><svg viewBox="0 0 48 48"><use href="#tile"/><rect x="15" y="6" width="18" height="36" fill="#222" stroke="#000" stroke-width="2"/><rect x="16" y="7" width="16" height="16" fill="#bbb"/></svg><svg viewBox="0 0 48 48"><circle cx="24" cy="24" r="22" fill="#aaa" stroke="#444" stroke-width="2.500"/><path d="M24 9A15 15 0 1 0 38 29L45 24L38 18A15 15 0 0 0 24 9Z" fill="#2c2c2c" stroke="#111" stroke-width="2"/></svg><svg viewBox="0 0 48 48"><rect x="1.500" y="1.500" width="45" height="45" rx="4" fill="url(#greyg)" stroke="#111" stroke-width="2.500"/><text x="24" y="19" class="dg" fill="#777">4</text><text x="24" y="44" class="dg" fill="#222">5</text></svg><svg viewBox="0 0 48 48"><use href="#tile"/><path d="M7 9H41V17H7ZM7 21H41V29H7ZM7 33H41V40H7Z" fill="#ddd" stroke="#111" stroke-width="2"/></svg></div>
      <div><svg viewBox="0 0 48 48"><rect x="1.500" y="1.500" width="45" height="45" rx="4" fill="#e33a86" stroke="#111" stroke-width="2.500"/><path d="M3 3H45V18L3 24Z" fill="#d39ab8"/><path d="M36 3H45V45H36Z" fill="#9a2fa0" opacity=".6"/><path d="M2 31H46" stroke="#111" stroke-width="2"/><circle cx="33" cy="31" r="4.500" fill="#fff" stroke="#111" stroke-width="2"/><circle cx="5" cy="31" r="4" fill="#fff" stroke="#111" stroke-width="2"/></svg><svg viewBox="0 0 48 48"><rect x="1.500" y="1.500" width="45" height="45" rx="4" fill="#7ed957" stroke="#111" stroke-width="2.500"/><path d="M12 3H24V14H12ZM34 3H45V12H34Z" fill="#b4ef7c"/><path d="M12 26H24V37H12ZM3 14H12V26H3Z" fill="#3c8f22"/><path d="M24 14H34V26H24Z" fill="#4da32c"/><path d="M12 37H24V45H12Z" fill="#143d0a"/><path d="M36 36H45V45H36Z" fill="#86f3cf"/><path d="M24 26H36V37H24Z" fill="#a4e84e"/></svg></div>
    </div><p>Input</p></div>
    <div class="panel c3"><div class="cols sq">
      <div><svg viewBox="0 0 48 48"><path d="M14 28Q22 14 30 7Q34 18 34 32" fill="none" stroke="#5d2417" stroke-width="2.500"/><path d="M10 18Q12 4 32 4Q26 18 10 18Z" fill="#5cab2c" stroke="#2b5d12"/><circle cx="13" cy="32" r="9.500" fill="#cf2318"/><circle cx="34" cy="37" r="9" fill="#c21d14"/><circle cx="10" cy="29" r="2.500" fill="#f7a79c"/><circle cx="31" cy="34" r="2.500" fill="#f7a79c"/></svg><svg viewBox="0 0 48 48"><use href="#tile"/><path d="M4 42H44V45H4Z"/><path d="M24 42V26" stroke="#000" stroke-width="5"/><path d="M24 30L10 18M24 30L38 18M24 28V8M17 24L6 24M31 24L42 24M20 26L15 9M28 26L33 9M12 20L8 12M36 20L40 12M16 14L22 9M32 14L27 9M10 24L7 19M38 24L41 19" stroke="#000" stroke-width="2.500"/></svg></div>
      <div><svg viewBox="0 0 48 48"><path d="M5 16H22V9L44 24L22 40V32H5Z" fill="#444" stroke="#111" stroke-width="2.500"/></svg><svg viewBox="0 0 48 48"><path d="M5 16H22V9L44 24L22 40V32H5Z" fill="#eee" stroke="#666" stroke-width="2.500"/></svg></div>
      <div><svg viewBox="0 0 48 48"><ellipse cx="19" cy="20" rx="13" ry="16" transform="rotate(20 19 20)" fill="#c9c9c9" stroke="#666" stroke-width="2.500"/><circle cx="19" cy="21" r="5" fill="#444"/><ellipse cx="31" cy="31" rx="11" ry="14" transform="rotate(20 31 31)" fill="#e2598f" stroke="#8a1d4d" stroke-width="2.500"/><circle cx="29" cy="31" r="5" fill="#7b0f3e"/></svg><svg viewBox="0 0 48 48"><path d="M19 5H27V20L36 38Q38 44 30 45H16Q8 44 10 38L19 20Z" fill="#f7e8ee" stroke="#7a3550" stroke-width="2.500"/><path d="M16 26H30L35 38Q36 43 30 43H16Q10 43 12 38Z" fill="#d6437f"/></svg></div>
    </div><p>Util</p></div>
    <div class="panel c1"><div class="cols sq">
      <div><svg viewBox="0 0 48 48"><rect width="48" height="48" fill="#eee"/><path d="M0 8L48 16M6 0L12 48M0 34L28 0M10 18L36 48M42 0L18 36M0 38H48M4 6Q30 10 34 28M46 6Q44 24 34 22M2 48Q10 30 18 44M36 44Q40 34 48 36" stroke="#222" stroke-width="2.200" fill="none"/></svg><svg viewBox="0 0 48 48"><rect width="48" height="48" fill="#000"/><path d="M0 8L48 20M6 0L12 48M0 30L40 0M10 18L36 48M48 10L4 46M26 0Q20 20 32 40M0 38H48M40 2Q48 20 40 36" stroke="#eee" stroke-width="2.600" fill="none"/><path d="M20 4H30L26 14H20Z" fill="#ddd"/></svg><svg viewBox="0 0 48 48"><rect x="3" y="3" width="41" height="41" rx="3" fill="#fafafa"/><path d="M24 10H36V38H30V22H18V16H24Z" fill="#111"/></svg></div>
    </div><p class="sp">Spid...</p></div>
  </div>
  <div class="gh-bar">
    <svg width="40" height="44" viewBox="0 0 40 44"><path d="M5 24V1H22L35 8V24Z" fill="#f6f6f6" stroke="#444" stroke-width="2"/><path d="M1 43V21H14L18 15H38V43Z" fill="#7dc24b" stroke="#2d6e14" stroke-width="2"/><path d="M3 38V23H15L19 17H36V26Z" fill="#b8e28e" opacity=".6"/></svg>
    <svg width="44" height="44" viewBox="0 0 44 44"><path d="M1 1H43V43H5L1 39Z" fill="#2468d8" stroke="#0b2c78" stroke-width="2"/><rect x="8" y="3" width="28" height="18" fill="#e9edf2"/><path d="M11 9H33M11 14H33" stroke="#b5bcc6" stroke-width="2"/><rect x="10" y="27" width="20" height="14" fill="#bbb" stroke="#123"/><rect x="13" y="30" width="7" height="10" fill="#1b59c8"/></svg>
    <i class="sep"></i>
    <div class="zoom"><span>85%</span><svg width="18" height="12" viewBox="0 0 18 12"><path d="M1 1L9 9L17 1" fill="none" stroke="#444" stroke-width="2.200"/></svg></div>
    <svg width="76" height="44" viewBox="0 0 76 44"><path d="M4 16V4H17M29 4H42V16M42 28V40H29M17 40H4V28" fill="none" stroke="#222" stroke-width="7.500"/><path d="M18 18L28 27M28 18L18 27" stroke="#222" stroke-width="4"/><path d="M59 20H70L64.500 27Z"/></svg>
    <svg width="76" height="44" viewBox="0 0 76 44"><path d="M3 22Q23-2 44 22Q23 44 3 22Z" fill="#eee" stroke="#222" stroke-width="2.500"/><circle cx="23" cy="22" r="12" fill="#79c3ea" stroke="#1d4a70" stroke-width="2"/><circle cx="23" cy="22" r="6" fill="#071320"/><circle cx="20" cy="18" r="3" fill="#fff"/><path d="M59 20H70L64.500 27Z"/></svg>
    <svg width="44" height="44" viewBox="0 0 44 44"><path d="M1 12Q8 16 4 27Q0 39 11 41L17 38" fill="none" stroke="#4a1d1a" stroke-width="3.500"/><path d="M41 2L16 27L20 38L38 22Z" fill="#d93a33" stroke="#5e1512" stroke-width="2"/><path d="M16 27L10 41L21 37Z" fill="#e9c98a" stroke="#222"/></svg>
  </div>
  <svg class="canvas" width="1700" height="1098" viewBox="121 812 1700 1098">
    <rect x="121" y="812" width="1700" height="1098" fill="#d3d0c8"/>
    <path d="M189 812V1910M444 812V1910M699 812V1910M953 812V1910M1209 812V1910M1463 812V1910M1719 812V1910M121 835H1821M121 919H1821M121 1004H1821M121 1089H1821M121 1175H1821M121 1259H1821M121 1345H1821M121 1429H1821M121 1515H1821M121 1599H1821M121 1684H1821M121 1769H1821M121 1855H1821" stroke="#b9b6af" stroke-width="2" fill="none"/>
    <path d="M121 950Q420 928 760 833M121 965L760 971M1232 1544C1340 1544 1420 1520 1486 1462" stroke="#aba9a2" stroke-width="2.200" fill="none"/>
    <g fill="none" stroke="#575753" stroke-width="5.500"><path d="M512 1034C568 1034 568 1050 625 1050M510 1068C566 1068 568 1085 625 1085M513 1102C568 1102 568 1118 625 1118M518 1136C568 1136 568 1153 625 1153M526 1284H660M540 1330C600 1330 600 1318 660 1318M576 1390C620 1390 620 1352 660 1352M554 1527H678"/></g>
    <path d="M438 1675C560 1675 560 1561 680 1561" fill="none" stroke="url(#wire)" stroke-width="6"/>
    <g fill="#fff" stroke="#111" stroke-width="3"><circle cx="503" cy="1034" r="7"/><circle cx="501" cy="1068" r="7"/><circle cx="505" cy="1102" r="7"/><circle cx="510" cy="1136" r="7"/><circle cx="518" cy="1284" r="7"/><circle cx="532" cy="1330" r="7"/><circle cx="568" cy="1390" r="7"/><circle cx="547" cy="1527" r="7"/><circle cx="1227" cy="1544" r="7"/><circle cx="432" cy="1675" r="7"/><circle cx="633" cy="1050" r="7"/><circle cx="633" cy="1085" r="7"/><circle cx="633" cy="1118" r="7"/><circle cx="633" cy="1153" r="7"/><circle cx="667" cy="1284" r="7"/><circle cx="667" cy="1318" r="7"/><circle cx="667" cy="1352" r="7"/><circle cx="684" cy="1527" r="7"/><circle cx="684" cy="1561" r="7"/></g>
    <g stroke="#3c3c3c" stroke-width="2.200">
      <rect x="100" y="1015" width="404" height="37" rx="4" fill="url(#node)"/><rect x="100" y="1086" width="405" height="35" rx="4" fill="url(#node)"/><rect x="191.500" y="1053" width="310" height="34" rx="4" fill="url(#node)"/>
      <rect x="332" y="1117.500" width="177" height="37" rx="4" fill="url(#mauve)"/><rect x="427" y="1121" width="78" height="30" fill="#484848" stroke="#000" stroke-width="3"/><path d="M429 1136H503" stroke="#3a3a3a" stroke-width="1"/>
      <rect x="100" y="1265.500" width="417" height="37" rx="4" fill="url(#node)"/><rect x="100" y="1313" width="431" height="34" rx="4" fill="url(#node)"/><path d="M100 1314H261V1346H100Z" fill="url(#mauve)"/>
      <rect x="214.500" y="1373" width="352" height="34" rx="4" fill="url(#node)"/><path d="M218 1373H356V1407H218Q215 1407 215 1404V1376Q215 1373 218 1373Z" fill="url(#mauve)"/>
      <rect x="100" y="1509" width="446" height="37" rx="4" fill="url(#node)"/>
      <g stroke="#222" stroke-width="2.800"><rect x="633.500" y="1031.500" width="300" height="142" rx="4" fill="url(#teal)"/><rect x="667" y="1263.500" width="300" height="109" rx="4" fill="url(#teal)"/><rect x="684.500" y="1506.500" width="541" height="74" rx="4" fill="url(#teal)"/></g>
      <rect x="1377" y="1420" width="270" height="47" rx="4" fill="#c6c25c"/>
    </g>
    <path d="M194 1018V1049M355 1056V1084M355 1089V1118M296 1268V1300M291 1512V1543" stroke="#aaa" stroke-width="1.500"/>
    <path d="M474 1024H496L485 1046ZM472 1057H494L483 1080ZM476 1091H498L487 1114ZM488 1273H510L499 1295ZM516 1516H538L527 1538Z" fill="#2a2a2a" stroke="#111" stroke-width="1"/>
    <path d="M277 1330H513M277 1320V1330M301 1324V1330M325 1324V1330M348 1324V1330M418 1324V1330M442 1324V1330M466 1324V1330M490 1324V1330M513 1320V1330M372 1390H549M372 1380V1390M389 1384V1390M407 1384V1390M425 1384V1390M531 1384V1390M549 1380V1390" stroke="#aaa" stroke-width="1.500" fill="none"/>
    <path d="M358 1316H408V1344H358ZM468 1376H518V1404H468Z" fill="#d9d9d9"/>
    <g fill="#fff" stroke="#000" stroke-width="3.500"><circle cx="347" cy="1330" r="5"/><circle cx="458.500" cy="1390" r="5"/></g>
    <g class="gt">
      <text x="123" y="1040" textLength="59">on Rule</text><text x="303" y="1040" textLength="54">Oldest</text>
      <text x="202" y="1074" textLength="142">Type of Force Set</text><text x="368" y="1074" textLength="83">Monomial</text>
      <text x="131" y="1108" textLength="213">Topological Configuration</text><text x="369" y="1108" textLength="85">Inbetween</text>
      <text x="348" y="1142" textLength="56">Toggle</text><text x="437" y="1139" textLength="54" class="mono" fill="#fff" font-size="21">True</text>
      <text x="675" y="1056" textLength="78">Force sele</text><text x="721" y="1091" textLength="33">Type</text><text x="644" y="1124" textLength="109">Topological C</text><text x="725" y="1158" textLength="28">Flip</text>
      <text x="123" y="1290" textLength="161">ode Placement Rule</text><text x="309" y="1290" textLength="157">UserSelectedParam</text><text x="129" y="1336" textLength="119">Number Slider</text><text x="360" y="1336" textLength="43">0.297</text><text x="225" y="1396" textLength="118">Number Slider</text><text x="471" y="1396" textLength="44">0.488</text>
      <text x="679" y="1290" textLength="74">Node pla</text><text x="691" y="1324" textLength="62">min dist</text>
      <text x="124" y="1533" textLength="155">determinacies Rule</text><text x="304" y="1533" textLength="190">UserDefinedMagnitude</text><text x="694" y="1533" textLength="240">Force indeterminacies rule ID</text><text x="885" y="1567" textLength="48">forces</text><text x="992" y="1550" textLength="215">Force indeterminacies rule</text>
    </g>
    <g stroke="#1f3436" stroke-width="4.500" stroke-linecap="round" fill="none"><path d="M939 1521H949L942 1532H952M940 1546L966 1517M942 1562L972 1527M962 1562L986 1534"/><path d="M944 1563L985 1518" stroke-width="11"/><path d="M944 1563L985 1518" stroke="#8fbcc0" stroke-width="5"/></g>
    <rect x="90" y="1597.500" width="340" height="156" rx="4" fill="#b5d94c" stroke="#2f5a1e" stroke-width="3"/><rect x="100" y="1599.500" width="328" height="7" fill="#def0a4"/><rect x="100" y="1607" width="321" height="136" fill="#d2d2d2" stroke="#222" stroke-width="3"/><rect x="408" y="1609" width="12" height="132" rx="5" fill="#6c6c6c"/><path d="M121 1611H408" stroke="#b5b5b5" stroke-width="5"/>
    <path d="M161 1622H366M161 1649H366M161 1677H366" stroke="#c0c0c0" stroke-width="2"/>
    <g fill="#fff" stroke="#444" stroke-width="2.500"><path d="M170.500 1608V1634H249V1608Z"/><rect x="273.500" y="1633.500" width="79" height="27"/><rect x="213" y="1661.500" width="78" height="28"/></g>
    <g class="mono" font-size="18" text-anchor="middle" fill="#222"><text x="209" y="1625" textLength="66">-10.57</text><text x="313" y="1652" textLength="44">9.98</text><text x="251" y="1680" textLength="54">-2.13</text></g>
    <rect x="100" y="1856" width="35" height="53" fill="#9a9a9a" stroke="#111" stroke-width="2.500"/>
    <path d="M1705 1824L1716 1821L1722 1834L1712 1836ZM1717 1852Q1718 1828 1734 1816Q1742 1806 1750 1810Q1758 1803 1768 1806Q1782 1806 1786 1815Q1795 1816 1796 1826L1761 1850Z" fill="#000"/>
    <circle cx="1761" cy="1852" r="39" fill="url(#knob)" stroke="#444" stroke-width="2"/><circle cx="1761" cy="1852" r="36.500" fill="none" stroke="#fff" stroke-width="4"/><path d="M1726 1840L1738 1841L1730 1828ZM1772 1816L1784 1822L1773 1829ZM1796 1864L1785 1864L1792 1876ZM1749 1888L1738 1884L1748 1875Z" fill="#fff"/>
  </svg>
  <div class="gh-status"><span>...</span><em>1.0.0007</em><svg width="22" height="24" viewBox="0 0 22 24" fill="#aaa"><path d="M17 0H21V4H17ZM17 9H21V13H17ZM17 18H21V22H17ZM9 9H13V13H9ZM9 18H13V22H9ZM1 18H5V22H1Z"/></svg></div>
</section>

<section class="dialog">
  <div class="d-title"><span>Grasshopper breakpoint</span><svg width="22" height="22" viewBox="0 0 22 22"><path d="M1 1L21 21M21 1L1 21" stroke="#fff" stroke-width="2.200"/></svg></div>
  <div class="d-msg">
    <svg width="64" height="64" viewBox="-32 -32 64 64"><circle r="29" fill="url(#redg)" stroke="#200" stroke-width="3"/><circle r="25.500" fill="none" stroke="#f0b090" stroke-width="1.500" opacity=".7"/><path d="M-14-14L14 14M14-14L-14 14" stroke="#9c3020" stroke-width="13"/><path d="M-13-13L13 13M13-13L-13 13" stroke="#eee" stroke-width="9"/></svg>
    <p>Undo recording threw an exception: Source parameter is no linked to target parameter</p>
    <svg width="64" height="64" viewBox="-32 -32 64 64"><circle r="29" fill="url(#ambg)" stroke="#200" stroke-width="3"/><path d="M-6-21H6V5H-6ZM-5 9H5V19H-5Z" fill="#eee" stroke="#9a2a22" stroke-width="2.500"/></svg>
  </div>
  <div class="d-info"><span>Breakpoint call stack information:</span><span>1.0.0007</span></div>
  <div class="list">
    <div class="row head"><span>Method</span><span>File</span></div>
    <div class="row"><span>GH_DocumentObject.RecordUndoEvent()</span><span>Remote file (line: ?)</span></div>
    <div class="row"><span>GalapagosGeneListObjectAttributes.RespondToMouseMove()</span><span>Remote file (line: ?)</span></div>
    <div class="row"><span>GH_Canvas.MouseMove_ActiveObject()</span><span>Remote file (line: ?)</span></div>
    <div class="row"><span>GH_Canvas.Canvas_MouseMove()</span><span>Remote file (line: ?)</span></div>
    <div class="row"><span>MouseEventHandler.Invoke()</span><span>Remote file (line: ?)</span></div>
    <div class="row"><span>Control.OnMouseMove()</span><span>Remote file (line: ?)</span></div>
    <div class="row"><span>Control.WmMouseMove()</span><span>Remote file (line: ?)</span></div>
    <div class="row"><span>Control.WndProc()</span><span>Remote file (line: ?)</span></div>
    <div class="row"><span>NativeWindow.Callback()</span><span>Remote file (line: ?)</span></div>
    <div class="row"><span></span><span></span></div><div class="row"><span></span><span></span></div><div class="row last"><span></span><span></span></div>
    <div class="sbar"><svg width="33" height="30" viewBox="0 0 33 30"><path d="M20 9L13 15.500L20 22" fill="none" stroke="#555" stroke-width="4"/></svg><i></i><svg width="33" height="30" viewBox="0 0 33 30"><path d="M13 9L20 15.500L13 22" fill="none" stroke="#555" stroke-width="4"/></svg></div>
  </div>
  <div class="d-foot"><label><i></i>Do not show this message again</label><button>Close</button></div>
</section>
</body>
</html>
```
FILE: styles.css
```css
* { box-sizing: border-box; }
body { margin: 0; width: 3360px; height: 2100px; overflow: hidden; position: relative; background: #101012; font-family: "Open Sans", "Noto Sans", sans-serif; font-size: 22.3px; line-height: 30px; color: #000; }
p, h1, h2, dl, dt, dd { margin: 0; font-weight: 400; font-size: inherit; }
svg { display: block; flex: none; }
span, label, b { white-space: nowrap; }
.defs { position: absolute; }

.menubar { height: 48px; display: flex; align-items: center; padding: 0 30px 0 39px; font-family: Inter, sans-serif; background: linear-gradient(90deg, #905f90 0, #7c70a0 17%, #627db0 33%, #4682b8 50%, #367ab4 66%, #2a6fac 82%, #2466a4 100%); color: #f2eff6; }
.apple { margin-top: -4px; }
.mac-menu { display: flex; gap: 42px; margin-left: 40px; font-size: 25px; font-weight: 500; margin-top: -3px; text-shadow: 0 2px 4px rgba(0,0,0,.25); }
.mac-menu b { letter-spacing: .55px; font-weight: 700; }
.mac-menu span { letter-spacing: -.1px; }
.status { margin-left: auto; font-family: Inter, sans-serif; font-weight: 500; }
.backdrop { height: 2052px; width: 3360px; background: linear-gradient(90deg, #d24468 0 650px, #3a7fb8 655px 100%) 0 0 / 100% 12px no-repeat, linear-gradient(#d8d2d6 0 58px, #262627 59px 100%); }

.vm { position: absolute; left: 13px; top: 50px; width: 3347px; height: 2046px; display: flex; flex-direction: column; border-radius: 20px 20px 0 0; overflow: hidden; background: #e9ebf0; }
.vm-title { height: 77px; background: #f5f1f3; border-bottom: 2px solid #d5d1d3; display: grid; grid-template-columns: 1fr auto 1fr; align-items: center; font-family: Inter, sans-serif; }
.vm-title h1 { font-size: 30.2px; color: #444246; padding-top: 7px; }
.lights { display: flex; gap: 16px; padding-left: 27px; }
.lights i { width: 24px; height: 24px; border-radius: 50%; border: 1px solid rgba(0,0,0,.15); }
.lights .r { background: #ee6a5f; } .lights .y { background: #f5bd4f; } .lights .g { background: #61c454; } .lights .b { background: #68b3ee; }
.devices { justify-self: end; margin-right: 12px; }

.rhino { display: flex; flex-direction: column; color: #444; }
.r-title { height: 46px; background: #fff; display: flex; align-items: center; gap: 10px; padding: 0 40px 4px 4px; color: #999; font-size: 22.75px; }
.r-title span { padding-top: 3px; }
.r-title .wbtn { margin-left: auto; }
.r-menu { height: 35px; background: #fff; display: grid; color: #6e6e6e; padding-left: 15px; align-items: center; grid-template-columns: 64px 68px 79px 90px 105px 84px 82px 85px 142px 134px 83px 110px 101px 97px 149px 139px 80px; }
.r-cmd { height: 82px; padding: 10px 4px 7px 15px; display: flex; border-bottom: 2px solid #d8dae6; color: #222; }
.lines { flex: 1; }
.lines p { height: 28px; background: #fff; border-bottom: 2px solid #c3cadb; padding-left: 2px; line-height: 27px; }
.lines .in { height: 36px; border: 0; font-weight: 700; line-height: 33px; letter-spacing: -.3px; }
.r-tabs { height: 42px; border-bottom: 2px solid #c3cadb; display: grid; grid-template-columns: 1784px 157px 180px 126px 1fr 33px; align-items: center; padding-left: 15px; }
.r-tabs span { padding-top: 9px; }
.r-tabs .on { padding: 0 0 0 20px; border-top: 2px solid #c3cadb; border-left: 2px solid #c3cadb; border-top-left-radius: 14px; height: 34px; width: 200px; align-self: end; line-height: 34px; }
.r-bar { height: 194px; display: flex; padding: 9px 0 0 26px; gap: 21px; background: linear-gradient(#cdd4e6,#cdd4e6) 7px 0/2px 183px no-repeat, linear-gradient(#cdd4e6,#cdd4e6) 12px 0/2px 183px no-repeat; }
.r-bar svg:nth-child(2) { margin-top: 7px; }
.r-bar .help { margin-left: 1672px; }
.help text { font-family: "Liberation Serif", serif; }
.r-mid { height: 1434px; display: flex; }
.tools { width: 115px; padding: 15px 0 0 3px; display: grid; grid-template-columns: 56px 56px; grid-auto-rows: 56px; align-content: start; background: linear-gradient(#cdd4e6,#cdd4e6) 7px 6px/108px 2px no-repeat, linear-gradient(#cdd4e6,#cdd4e6) 7px 11px/108px 2px no-repeat; }
.tools svg { width: 56px; height: 56px; }
.num { font: 28px "Liberation Sans", sans-serif; text-anchor: middle; }
.props { width: 87px; margin-left: 16px; display: flex; flex-direction: column; }
.props h2 { height: 126px; padding: 5px 0 0 5px; line-height: 32px; font-size: 23px; }
.props dl { padding: 9px 0 0 17px; margin-bottom: auto; margin-top: 2px; color: #333; overflow: hidden; }
.props dt { height: 52px; line-height: 56px; border-bottom: 1px solid #dcdfe8; font-size: 24px; white-space: nowrap; }
.props dd { height: 42px; line-height: 45px; margin-left: 32px; padding-left: 7px; border-bottom: 1px solid #dcdfe8; white-space: nowrap; }
.props .dim { color: #888; }
.osnap { height: 100px; display: grid; padding-left: 19px; align-content: start; padding-top: 22px; grid-template-columns: 86px 96px 102px 88px 88px 74px 94px 84px 104px 96px 114px 135px 120px; color: #333; }
.osnap label { display: flex; align-items: center; gap: 6px; }
.osnap i { width: 27px; height: 27px; flex: none; border: 2px solid #444; background: #fff; font: 700 24px/24px "DejaVu Sans", sans-serif; text-align: center; }
.osnap .off { border-color: #b8b8b8; background: #e2e2e4; width: 24px; height: 24px; }
.r-status { height: 37px; border-top: 2px solid #c3cadb; display: grid; line-height: 38px; grid-template-columns: 100px 176px 176px 176px 176px 335px 131px 91px 94px 95px 146px 118px 184px 80px 1fr; text-align: center; color: #333; }
.r-status span { border-right: 2px solid #c3cadb; height: 35px; padding-left: 2px; }
.r-status .act { background: #d0d8ee; font-weight: 700; letter-spacing: -.3px; }
.r-status .layer { text-align: left; display: flex; gap: 6px; padding-left: 7px; }
.layer i { width: 27px; height: 28px; background: #000; margin-top: 7px; }
.r-status .tol { text-align: left; border: 0; padding-left: 3px; letter-spacing: -.1px; }

.gh { position: absolute; left: 117px; top: 189px; width: 1708px; height: 1770px; background: #f0f0f0; border: 1px solid #8c8c8c; display: flex; flex-direction: column; box-shadow: 0 8px 26px 4px rgba(0,0,0,.34); }
.gh-title { height: 59px; background: #fff; display: flex; align-items: center; justify-content: space-between; padding: 0 35px 3px 17px; color: #999; }
.gh-title span { padding-top: 2px; }
.gh-menu { height: 55px; display: grid; grid-template-columns: 74px 79px 87px 114px 126px 1fr auto; padding: 1px 19px 0 26px; align-items: center; background: linear-gradient(90deg, #efefef, #fafafa); }
.gh-menu .doc { letter-spacing: .1px; }
.gh-tabs { height: 45px; display: flex; border-bottom: 2px solid #999; overflow: hidden; }
.gh-tabs > * { width: 56.05px; height: 44px; flex: none; text-align: center; font: 700 31px/46px "Liberation Sans", sans-serif; color: #333; -webkit-text-stroke: 1px #333; margin-top: 2px; }
.gh-tabs b { position: relative; left: -1px; }
.gh-tabs .sel { background: #fff; border: 2px solid #999; border-bottom: 0; border-left: 0; border-radius: 10px 12px 0 0; margin-top: 0; height: 45px; }
.gh-tabs .sig { font-family: "Liberation Serif", serif; }
.gh-tabs .cut { width: 26px; text-align: left; padding-left: 4px; font-size: 26px; }
.ribbon { height: 398px; padding: 6px 7px; display: flex; gap: 8px; align-items: flex-start; background: linear-gradient(#d6d6d6, #f0f0f0 90%); }
.panel { border: 2px solid #9a9a9a; border-radius: 8px; box-shadow: inset 0 0 0 2px #f3f3f3; background: linear-gradient(#d6d6d6, #ececec); display: flex; flex-direction: column; }
.panel.c3 { width: 216px; } .panel.c2 { width: 140px; } .panel.c1 { width: 64px; }
.cols { display: flex; justify-content: center; }
.cols div { width: 76px; border-right: 1px solid #bbb; flex: none; }
.c1 .cols div { width: 60px; }
.cols div:last-child { border: 0; }
.cols svg { width: 48px; height: 42px; margin: 7px 0 14px 13px; }
.cols svg:last-child { margin-bottom: 9px; }
.cols div { padding-top: 1px; }
.cols.sq svg { width: 48px; height: 48px; margin: 4px 0 8px 13px; }
.cols.sq svg:last-child { margin-bottom: 6px; }
.c1 .cols.sq svg { margin-left: 5px; }
.panel p { height: 27px; margin: 0 -2px -2px; border-radius: 0 0 8px 8px; color: #fff; font: 20px/23px "Liberation Sans", sans-serif; padding: 0 22px 0 0; display: flex; justify-content: center; background: linear-gradient(#999,#999) right 12px top 7px/3px 13px no-repeat, linear-gradient(#999,#999) right 8px top 12px/11px 3px no-repeat, linear-gradient(#2e2e2e, #141414); }
.panel .sp { padding: 0; background: linear-gradient(#2e2e2e, #141414); line-height: 20px; }
.hx { font: 700 34px "Liberation Serif", serif; text-anchor: middle; fill: #fff; }
.hx.sm { font-size: 25px; }
.dg { font: italic 700 27px "Liberation Sans", sans-serif; text-anchor: middle; }
.gh-bar { height: 65px; border-top: 3px solid #777; border-left: 3px solid #777; background: linear-gradient(#fff, #f1f1f1); display: flex; align-items: center; padding-left: 9px; }
.gh-bar svg:nth-child(2) { margin-left: 18px; }
.sep { width: 2px; height: 44px; background: #c9c9c9; margin-left: 17px; }
.zoom { width: 272px; height: 45px; border: 2px solid #777; background: #fff; margin: 0 11px 0 7px; display: flex; align-items: center; justify-content: space-between; padding: 0 6px; }
.zoom span { letter-spacing: -.6px; }
.gh-bar svg { margin-right: 9px; } .gh-bar svg:first-child, .gh-bar svg:nth-child(2) { margin-right: 0; }
.gh-bar .zoom svg { margin: 0; }
.canvas { margin-left: 3px; box-shadow: -3px 0 0 #8a8a8a; }
.gt { font: 17.5px "Open Sans", sans-serif; fill: #222; }
.gt .mono { fill: #fff; }
.mono { font-family: "Liberation Mono", monospace; }
.gh-status { height: 46px; border-top: 3px solid #fff; box-shadow: 0 1px 0 #d5d5d5 inset; margin-top: 2px; display: flex; align-items: center; padding: 0 5px 0 14px; }
.gh-status em { margin-left: auto; font: 21.5px "Liberation Sans", sans-serif; color: #666; margin: 3px 36px 0 auto; }
.gh-status svg { margin-top: 10px; }

.dialog { position: absolute; left: 753px; top: 651px; width: 1527px; height: 813px; border: 2px solid #3b85d9; background: #f0f0f0; box-shadow: 0 10px 40px 6px rgba(0,0,0,.38); font-family: "Liberation Sans", sans-serif; display: flex; flex-direction: column; }
.d-title { height: 61px; background: #3078d0; color: #fff; font-family: "Open Sans", sans-serif; display: flex; align-items: center; justify-content: space-between; padding: 0 19px 0 17px; letter-spacing: -.1px; }
.d-msg { height: 112px; display: flex; padding: 0 17px 0 20px; }
.d-msg svg { margin-top: 28px; }
.d-msg p { flex: 1; padding: 10px 0 0 12px; font-size: 22.13px; }
.d-info { display: flex; justify-content: space-between; padding: 10px 14px 0 15px; color: #a8a8a8; height: 50px; font-size: 22.4px; }
.list { width: 1501px; height: 511px; margin-left: 12px; border: 2px solid #767676; background: #fff; font: 22px/36px "Liberation Mono", "Courier New", monospace; letter-spacing: .78px; }
.row { height: 36px; display: grid; grid-template-columns: 1013px 1fr; border-bottom: 2px solid #f0f0f0; line-height: 39px; }
.row span { padding-left: 10px; border-right: 2px solid #f0f0f0; height: 36px; }
.row span:last-child { border: 0; }
.row.head { height: 48px; border: 0; line-height: 52px; }
.row.head span { height: 48px; border-color: #e2e2e2; }
.row.last { border: 0; height: 32px; } .row.last span { height: 31px; }
.sbar { height: 31px; background: #f0f0f0; display: flex; justify-content: space-between; }
.sbar i { width: 1124px; background: #cdcdcd; margin-right: auto; }
.d-foot { display: flex; justify-content: space-between; padding: 19px 12px 0 20px; }
.d-foot label { display: flex; gap: 8px; height: 42px; align-items: center; font-size: 22.15px; }
.d-foot i { width: 27px; height: 27px; border: 2px solid #444; background: #fff; }
.d-foot button { width: 157px; height: 45px; border: 3px solid #2f80d8; background: #e5f1fb; font: 23px "Liberation Sans", sans-serif; padding: 0; }
```
